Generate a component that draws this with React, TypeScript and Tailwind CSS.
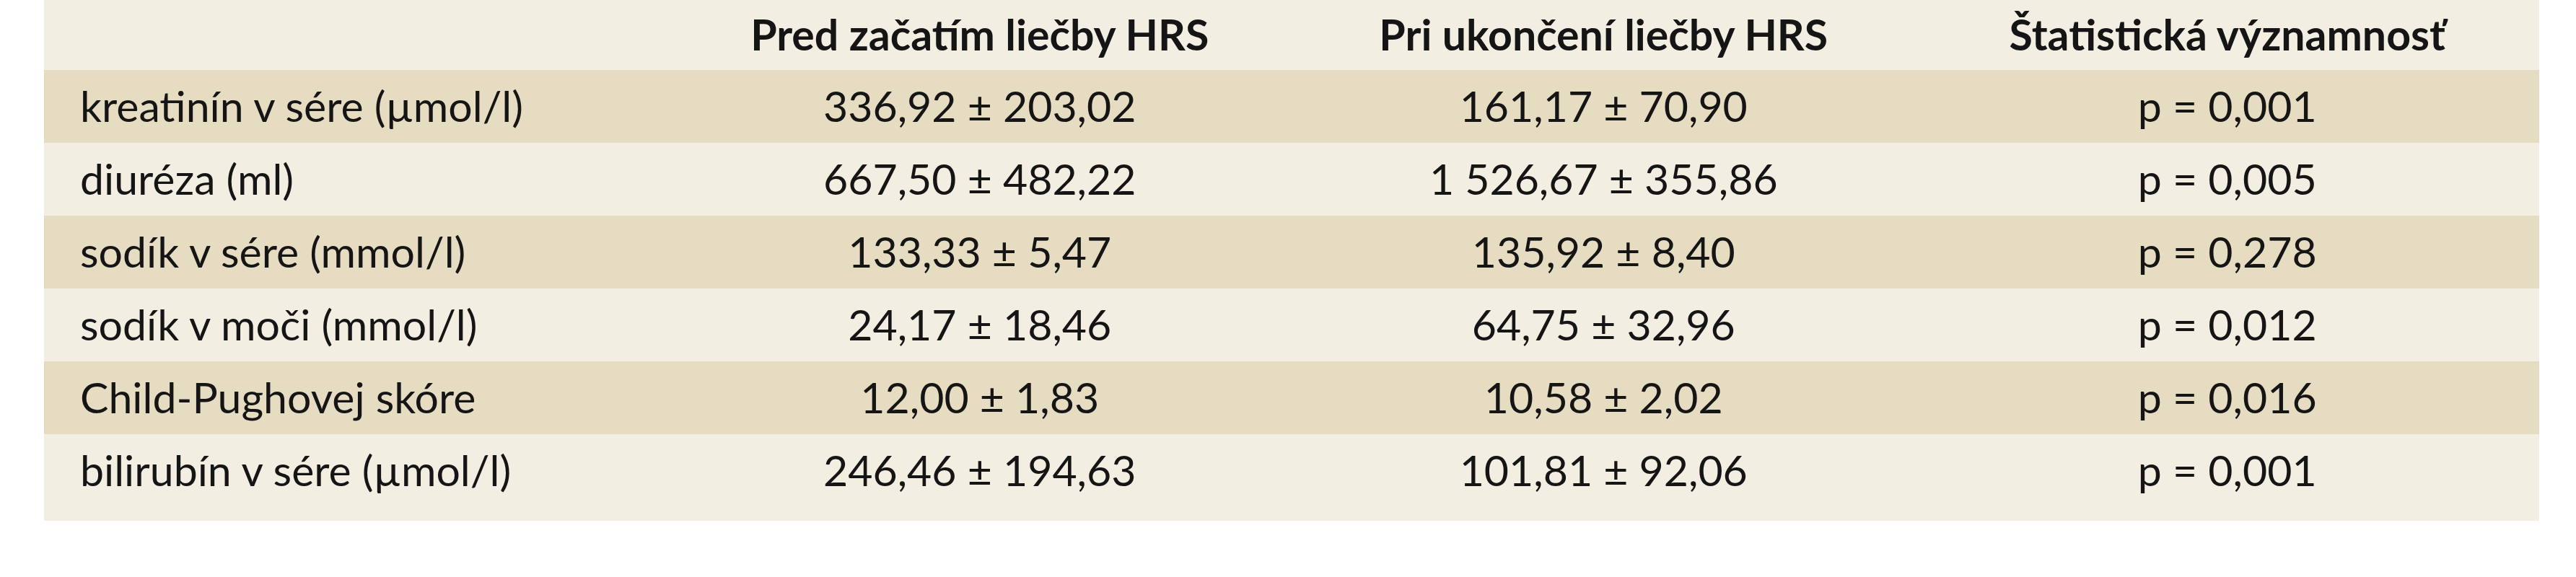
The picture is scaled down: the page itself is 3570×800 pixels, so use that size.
import React from "react";

const rows = [
  { label: "kreatinín v sére (µmol/l)", before: "336,92 ± 203,02", after: "161,17 ± 70,90", p: "p = 0,001" },
  { label: "diuréza (ml)", before: "667,50 ± 482,22", after: "1 526,67 ± 355,86", p: "p = 0,005" },
  { label: "sodík v sére (mmol/l)", before: "133,33 ± 5,47", after: "135,92 ± 8,40", p: "p = 0,278" },
  { label: "sodík v moči (mmol/l)", before: "24,17 ± 18,46", after: "64,75 ± 32,96", p: "p = 0,012" },
  { label: "Child-Pughovej skóre", before: "12,00 ± 1,83", after: "10,58 ± 2,02", p: "p = 0,016" },
  { label: "bilirubín v sére (µmol/l)", before: "246,46 ± 194,63", after: "101,81 ± 92,06", p: "p = 0,001" },
];

export default function App() {
  return (
    <div className="w-[3570px] h-[800px] bg-white pl-[61px] font-['Lato',sans-serif] text-[59px] text-[#151515]">
      <div className="w-[3458px] bg-[#f3eee2] pb-[19px]">
        <div className="grid grid-cols-4 h-[97px] items-center font-bold">
          <div />
          <div className="text-center">Pred začatím liečby HRS</div>
          <div className="text-center">Pri ukončení liečby HRS</div>
          <div className="text-center">Štatistická významnosť</div>
        </div>
        {rows.map((r, i) => (
          <div
            key={r.label}
            className={`grid grid-cols-4 h-[101px] items-center ${i % 2 === 0 ? "bg-[#e6dcc1]" : "bg-[#f3eee2]"}`}
          >
            <div className="pl-[50px] whitespace-nowrap">{r.label}</div>
            <div className="text-center whitespace-nowrap">{r.before}</div>
            <div className="text-center whitespace-nowrap">{r.after}</div>
            <div className="text-center whitespace-nowrap">{r.p}</div>
          </div>
        ))}
      </div>
    </div>
  );
}
